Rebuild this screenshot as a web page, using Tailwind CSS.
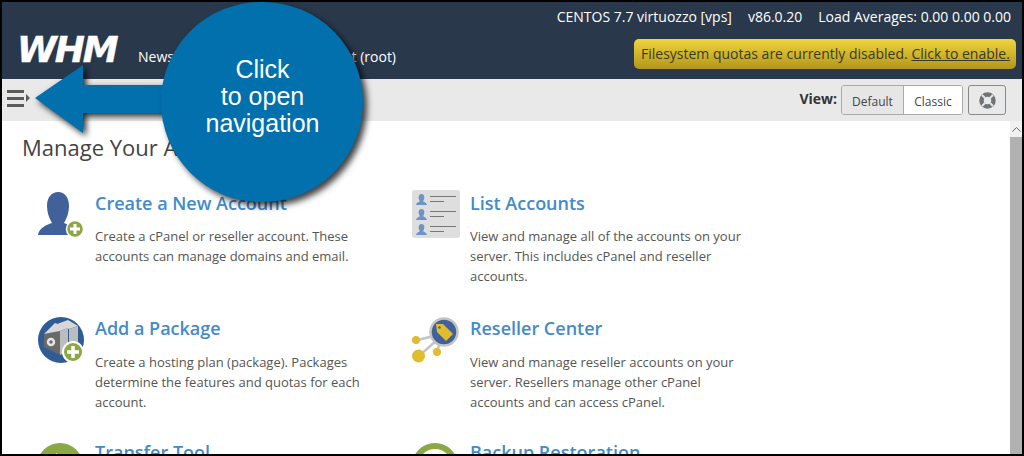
<!DOCTYPE html>
<html lang="en">
<head>
    <meta charset="UTF-8">
    <meta name="viewport" content="width=device-width, initial-scale=1.0">
    <title>WHM - Manage Your Accounts</title>
    <script src="https://cdn.jsdelivr.net/npm/@tailwindcss/browser@4"></script>
</head>
<body class="font-['Open_Sans',sans-serif] bg-black">

    <div class="relative w-[1024px] h-[456px] overflow-hidden border-2 border-black flex flex-col bg-white">

        <!-- Top bar -->
        <header class="h-[77px] shrink-0 bg-[#29394b] flex justify-between pl-[15px] pr-[6px]">
            <div class="flex items-start pt-[30px]">
                <span class="font-['DejaVu_Sans',sans-serif] font-bold italic text-[36px] leading-[36px] text-white tracking-[-2px] w-[121px] [-webkit-text-stroke:0.5px_white]">WHM</span>
                <nav class="flex justify-between w-[258px] text-[14px] leading-[20px] text-white pt-[15px]">
                    <span>News</span>
                    <span>Logout (root)</span>
                </nav>
            </div>
            <div class="flex flex-col items-end">
                <div class="flex gap-[16px] text-[14px] leading-[20px] text-white pt-[5px] pr-[5px]">
                    <span>CENTOS 7.7 virtuozzo [vps]</span>
                    <span>v86.0.20</span>
                    <span>Load Averages: 0.00 0.00 0.00</span>
                </div>
                <div class="mt-[12px] h-[30px] w-[382px] rounded-[5px] bg-gradient-to-b from-[#efd53c] to-[#b3961c] pl-[7px] text-[14px] leading-[29px] text-[#3a3a2a] whitespace-nowrap">
                    Filesystem quotas are currently disabled. <a class="underline">Click to enable.</a>
                </div>
            </div>
        </header>

        <!-- Toolbar -->
        <div class="h-[42px] shrink-0 bg-[#e9e9e9] flex items-center justify-between pl-[5px] pr-[16px]">
            <div class="flex items-center gap-[2px] -mt-[4px]">
                <div class="flex flex-col gap-[4px] w-[17px]">
                    <div class="h-[3px] bg-[#5c5c5c] w-[17px]"></div>
                    <div class="h-[3px] bg-[#5c5c5c] w-[17px]"></div>
                    <div class="h-[3px] bg-[#5c5c5c] w-[17px]"></div>
                </div>
                <svg width="4" height="8" viewBox="0 0 4 8"><path d="M0 0 L4 4 L0 8 Z" fill="#5c5c5c"/></svg>
            </div>
            <div class="flex items-center">
                <span class="text-[14px] font-bold text-[#333] mr-[4px] -mt-[4px]">View:</span>
                <div class="flex h-[30px] text-[12px] leading-[32px] text-[#444] border border-[#aaa] rounded-[3px] overflow-hidden">
                    <span class="w-[62px] text-center bg-[#e6e6e6] border-r border-[#aaa]">Default</span>
                    <span class="w-[58px] text-center bg-white">Classic</span>
                </div>
                <div class="ml-[5px] w-[38px] h-[30px] border border-[#888] rounded-[3px] flex items-center justify-center">
                    <svg width="17" height="17" viewBox="0 0 17 17" fill="none">
                        <circle cx="8.5" cy="8.5" r="6" stroke="#6f7478" stroke-width="4.5"/>
                        <path d="M3 3 L6 6 M14 3 L11 6 M3 14 L6 11 M14 14 L11 11" stroke="#dfe6ea" stroke-width="2"/>
                    </svg>
                </div>
            </div>
        </div>

        <!-- Content and scrollbar -->
        <div class="flex-1 flex min-h-0">
            <main class="flex-1 overflow-hidden pl-[20px] pt-[9px]">
                <h1 class="text-[22px] leading-[34px] text-[#444] font-normal">Manage Your Accounts</h1>

                <div class="grid grid-cols-[375px_375px] mt-[27px] pl-[15px] auto-rows-[125px]">

                    <div class="flex">
                        <div class="w-[58px] shrink-0">
                            <svg width="48" height="46" viewBox="0 0 48 46" class="mt-[1px] ml-[1px]">
                                <path d="M0 43 C1 36 8 33 14 31 C11 26 9 20 9 14 C9 5 14 0 20 0 C27 0 31 6 31 14 C31 20 29 26 26 31 C29 32 33 34 36 36 L36 43 Z" fill="#40619a"/>
                                <circle cx="37" cy="37" r="8.500" fill="#8aa843" stroke="#fff" stroke-width="1.500"/>
                                <path d="M37 32 V42 M32 37 H42" stroke="#fff" stroke-width="3"/>
                            </svg>
                        </div>
                        <div class="w-[280px]">
                            <a class="block text-[18px] leading-[24px] font-semibold text-[#428bca]">Create a New Account</a>
                            <p class="mt-[11px] text-[13px] leading-[20px] text-[#555]">Create a cPanel or reseller account. These accounts can manage domains and email.</p>
                        </div>
                    </div>

                    <div class="flex">
                        <div class="w-[58px] shrink-0">
                            <svg width="48" height="48" viewBox="0 0 48 48" class="-mt-[1px]">
                                <rect width="48" height="48" rx="3" fill="#dedede"/>
                                <g fill="#6d94c4">
                                    <path d="M4 15 C5 12 7 12 8 11 C6 9 6 4 9.500 4 C13 4 13 9 11 11 C12 12 14 12 15 15 Z"/>
                                    <path d="M4 30 C5 27 7 27 8 26 C6 24 6 19 9.500 19 C13 19 13 24 11 26 C12 27 14 27 15 30 Z"/>
                                    <path d="M4 45 C5 42 7 42 8 41 C6 39 6 34 9.500 34 C13 34 13 39 11 41 C12 42 14 42 15 45 Z"/>
                                </g>
                                <path d="M18 6.500 H44 M18 11.500 H32 M18 21.500 H44 M18 26.500 H32 M18 36.500 H44 M18 41.500 H32" stroke="#777" stroke-width="1"/>
                            </svg>
                        </div>
                        <div class="w-[280px]">
                            <a class="block text-[18px] leading-[24px] font-semibold text-[#428bca]">List Accounts</a>
                            <p class="mt-[11px] text-[13px] leading-[20px] text-[#555]">View and manage all of the accounts on your server. This includes cPanel and reseller accounts.</p>
                        </div>
                    </div>

                    <div class="flex">
                        <div class="w-[58px] shrink-0">
                            <svg width="48" height="48" viewBox="0 0 48 48" class="mt-[1px] ml-[1px]">
                                <circle cx="23" cy="23" r="23" fill="#2f5c94"/>
                                <path d="M6 17 L22 14 L22 38 L6 30 Z" fill="#6a6a6a"/>
                                <path d="M6 17 L17 6 L30 11 L22 14 Z" fill="#d8d8d8"/>
                                <path d="M22 14 L30 11 L30 34 L22 38 Z" fill="#bdbdbd"/>
                                <path d="M19 7 L30 3 L40 9 L31 12 Z" fill="#d8d8d8"/>
                                <path d="M31 12 L40 9 L40 26 L31 30 Z" fill="#bdbdbd"/>
                                <circle cx="13" cy="25" r="3" fill="none" stroke="#e6e6e6" stroke-width="2.500"/>
                                <circle cx="35" cy="35" r="10" fill="#8aa843" stroke="#fff" stroke-width="2"/>
                                <path d="M35 29 V41 M29 35 H41" stroke="#fff" stroke-width="3.500"/>
                            </svg>
                        </div>
                        <div class="w-[280px]">
                            <a class="block text-[18px] leading-[24px] font-semibold text-[#428bca]">Add a Package</a>
                            <p class="mt-[12px] text-[13px] leading-[20px] text-[#555]">Create a hosting plan (package). Packages determine the features and quotas for each account.</p>
                        </div>
                    </div>

                    <div class="flex">
                        <div class="w-[58px] shrink-0">
                            <svg width="48" height="48" viewBox="0 0 48 48" class="mt-[1px]">
                                <path d="M33 16 L6 23 M33 16 L7 39 M33 16 L25 33" stroke="#c4c4c4" stroke-width="2.500"/>
                                <circle cx="4" cy="23" r="4" fill="#e2bc2f"/>
                                <circle cx="6.500" cy="39" r="6.500" fill="#e2bc2f"/>
                                <circle cx="25" cy="35" r="4" fill="#e2bc2f"/>
                                <circle cx="32" cy="15" r="13.500" fill="#40619a" stroke="#c4c4c4" stroke-width="2.500"/>
                                <path d="M24 7 L31 7 L41 17 L34 24 L25 15 Z" fill="#e2bc2f"/>
                                <circle cx="27.500" cy="10.500" r="1.200" fill="#40619a"/>
                            </svg>
                        </div>
                        <div class="w-[280px]">
                            <a class="block text-[18px] leading-[24px] font-semibold text-[#428bca]">Reseller Center</a>
                            <p class="mt-[12px] text-[13px] leading-[20px] text-[#555]">View and manage reseller accounts on your server. Resellers manage other cPanel accounts and can access cPanel.</p>
                        </div>
                    </div>

                    <div class="flex">
                        <div class="w-[58px] shrink-0">
                            <svg width="48" height="48" viewBox="0 0 48 48" class="mt-[2px]">
                                <circle cx="23" cy="23" r="23" fill="#8aa843"/>
                                <path d="M19 10 L34 22 L19 34 Z" fill="#fff"/>
                            </svg>
                        </div>
                        <a class="block -mt-[1px] text-[18px] leading-[24px] font-semibold text-[#428bca]">Transfer Tool</a>
                    </div>

                    <div class="flex">
                        <div class="w-[58px] shrink-0">
                            <svg width="48" height="48" viewBox="0 0 48 48" class="mt-[2px]">
                                <circle cx="23" cy="23" r="20" fill="none" stroke="#8aa843" stroke-width="6"/>
                            </svg>
                        </div>
                        <a class="block -mt-[1px] text-[18px] leading-[24px] font-semibold text-[#428bca]">Backup Restoration</a>
                    </div>
                </div>
            </main>

            <!-- Scrollbar -->
            <div class="w-[12px] shrink-0 flex flex-col bg-[#f0f0f0]">
                <div class="h-[16px] flex items-center justify-center">
                    <svg width="9" height="5" viewBox="0 0 9 5" fill="none"><path d="M0.500 4.500 L4.500 0.500 L8.500 4.500" stroke="#666"/></svg>
                </div>
                <div class="flex-1 bg-[#b1b1b1]"></div>
            </div>
        </div>

        <!-- Tutorial callout, over the page -->
        <svg class="absolute left-[31px] top-[60px] drop-shadow-[3px_3px_3px_rgba(0,0,0,0.85)]" width="180" height="76" viewBox="0 0 180 76">
            <path d="M2 36 L50 3 L50 23 L180 23 L180 51 L50 51 L50 71 Z" fill="#0170ad"/>
        </svg>
        <div class="absolute left-[159px] top-0 w-[202px] h-[200px] rounded-full bg-[#0170ad] shadow-[4px_4px_6px_rgba(0,0,0,0.75)] flex flex-col items-center justify-center font-['Liberation_Sans',sans-serif] text-white text-[25px] leading-[27px] pb-[12px] pl-[1px]">
            <span>Click</span>
            <span>to open</span>
            <span>navigation</span>
        </div>
    </div>

</body>
</html>
